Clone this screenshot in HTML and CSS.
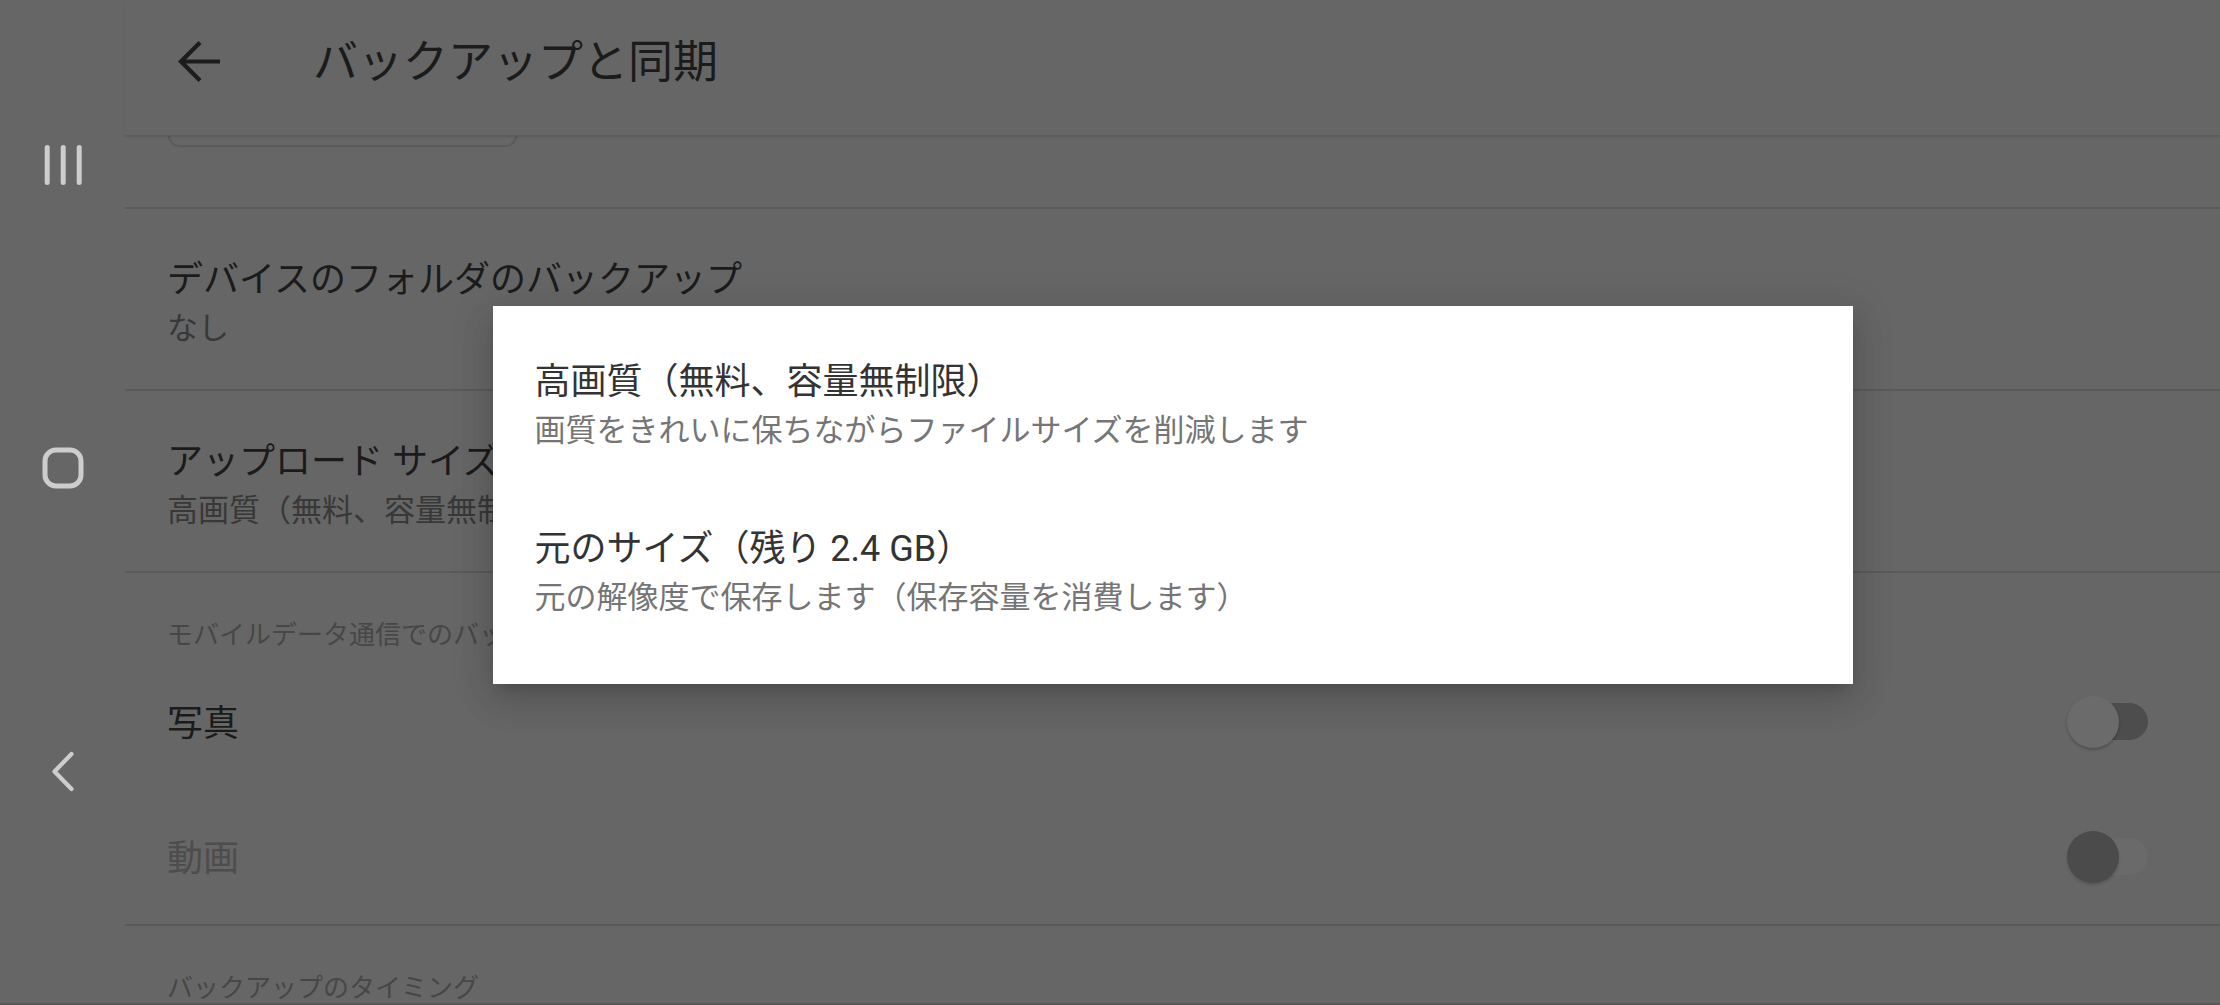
FILE: index.html
```html
<!DOCTYPE html>
<html lang="ja">
<head>
<meta charset="utf-8">
<title>バックアップと同期</title>
<link rel="stylesheet" href="styles.css">
</head>
<body>
<div class="screen">
  <nav class="sysnav">
    <svg class="nav-icon" viewBox="0 0 44 44" aria-hidden="true">
      <rect x="3.7" y="2" width="5" height="40" rx="2.5"/>
      <rect x="19.7" y="2" width="5" height="40" rx="2.5"/>
      <rect x="35.7" y="2" width="5" height="40" rx="2.5"/>
    </svg>
    <svg class="nav-icon" viewBox="0 0 44 44" aria-hidden="true">
      <rect class="outline" x="4" y="4" width="36" height="36" rx="11"/>
    </svg>
    <svg class="nav-icon" viewBox="0 0 44 44" aria-hidden="true">
      <path class="chev" d="M30.5 5 L13.5 22.5 L30.5 40"/>
    </svg>
  </nav>

  <div class="app">
    <header class="toolbar">
      <svg class="back" viewBox="0 0 44 44" aria-hidden="true">
        <path d="M43 20.5 H5 M23 1.5 L4 20.5 L23 39.5"/>
      </svg>
      <h1 class="title">バックアップと同期</h1>
    </header>

    <div class="list">
      <div class="tail-section"><div class="btn-tail"></div></div>
      <div class="divider"></div>

      <div class="row two-line">
        <div class="row-title">デバイスのフォルダのバックアップ</div>
        <div class="row-sub">なし</div>
      </div>
      <div class="divider"></div>

      <div class="row two-line">
        <div class="row-title">アップロード サイズ</div>
        <div class="row-sub">高画質（無料、容量無制限）</div>
      </div>
      <div class="divider"></div>

      <div class="subheader">モバイルデータ通信でのバックアップ</div>

      <div class="row switch-row">
        <div class="row-title">写真</div>
        <div class="switch"><span class="thumb"></span></div>
      </div>
      <div class="row switch-row disabled">
        <div class="row-title">動画</div>
        <div class="switch"><span class="thumb"></span></div>
      </div>
      <div class="divider"></div>

      <div class="subheader">バックアップのタイミング</div>
    </div>
  </div>

  <div class="overlay">
    <div class="dialog">
      <div class="option">
        <div class="opt-title">高画質（無料、容量無制限）</div>
        <div class="opt-sub">画質をきれいに保ちながらファイルサイズを削減します</div>
      </div>
      <div class="option">
        <div class="opt-title">元のサイズ（残り 2.4 GB）</div>
        <div class="opt-sub">元の解像度で保存します（保存容量を消費します）</div>
      </div>
    </div>
  </div>
</div>
</body>
</html>
```

FILE: styles.css
```css
html, body {
  margin: 0;
  padding: 0;
  height: 100%;
  overflow: hidden;
}

body {
  background: #666666;
  font-family: Roboto, "Noto Sans CJK JP", sans-serif;
}

.screen {
  position: relative;
  display: flex;
  width: 2220px;
  height: 1005px;
  overflow: hidden;
  border-bottom: 2px solid #575757;
  box-sizing: border-box;
}

/* system navigation bar */
.sysnav {
  width: 125px;
  flex: none;
  display: flex;
  flex-direction: column;
  align-items: center;
  padding-top: 143px;
  gap: 259px;
  box-sizing: border-box;
}

.nav-icon {
  display: block;
  width: 44px;
  height: 44px;
  fill: #cdcdcd;
}

.nav-icon .outline {
  fill: none;
  stroke: #cdcdcd;
  stroke-width: 5;
}

.nav-icon .chev {
  fill: none;
  stroke: #cdcdcd;
  stroke-width: 4.2;
  stroke-linecap: round;
  stroke-linejoin: round;
}

/* app */
.app {
  flex: 1;
  min-width: 0;
  display: flex;
  flex-direction: column;
}

.toolbar {
  flex: none;
  height: 136px;
  box-sizing: border-box;
  padding: 0 0 9px 52px;
  display: flex;
  align-items: center;
  border-bottom: 1px solid #5d5d5d;
  box-shadow: 0 1px 2px rgba(0, 0, 0, 0.12);
  position: relative;
  z-index: 1;
}

.back {
  display: block;
  flex: none;
  width: 44px;
  height: 44px;
  fill: none;
  stroke: #1c1c1c;
  stroke-width: 4.2;
}

.title {
  margin: 0 0 0 92px;
  font-size: 45px;
  font-weight: 400;
  line-height: 64px;
  color: #1b1b1b;
  white-space: nowrap;
}

.list {
  display: flex;
  flex-direction: column;
}

.tail-section {
  height: 71px;
  box-sizing: border-box;
  padding-left: 43px;
}

.btn-tail {
  width: 349px;
  height: 11px;
  box-sizing: border-box;
  border: 2px solid #5b5b5b;
  border-top: 0;
  border-radius: 0 0 12px 12px;
}

.divider {
  flex: none;
  height: 2px;
  background: #5a5a5a;
}

.row {
  box-sizing: border-box;
  padding: 0 72px 0 42px;
}

.two-line {
  height: 180px;
  padding-top: 45px;
}

.row-title {
  font-size: 36px;
  line-height: 52px;
  color: #1b1b1b;
  white-space: nowrap;
}

.row-sub {
  font-size: 31px;
  line-height: 45px;
  color: #383838;
  white-space: nowrap;
}

.subheader {
  padding: 44px 0 0 42px;
  font-size: 26px;
  line-height: 37px;
  color: #474747;
  white-space: nowrap;
}

.switch-row {
  height: 135px;
  display: flex;
  align-items: center;
  justify-content: space-between;
}

.switch-row .row-title {
  padding-top: 4px;
}

.switch {
  position: relative;
  flex: none;
  width: 74px;
  height: 37px;
  border-radius: 18.5px;
  background: #4d4d4d;
}

.thumb {
  position: absolute;
  left: -7.5px;
  top: -7.5px;
  width: 52px;
  height: 52px;
  border-radius: 50%;
  background: #6b6b6b;
  box-shadow: 0 2px 3px rgba(0, 0, 0, 0.22);
}

.disabled .row-title {
  color: #4d4d4d;
}

.disabled .switch {
  background: #6a6a6a;
}

.disabled .thumb {
  background: #4b4b4b;
  box-shadow: 0 2px 3px rgba(0, 0, 0, 0.15);
}

/* dialog */
.overlay {
  position: absolute;
  top: 0;
  left: 125px;
  right: 0;
  bottom: 0;
  display: flex;
  justify-content: center;
  align-items: flex-start;
  padding-top: 306px;
  box-sizing: border-box;
  z-index: 5;
}

.dialog {
  width: 1360px;
  height: 378px;
  box-sizing: border-box;
  padding: 50px 42px 0;
  background: #ffffff;
  display: flex;
  flex-direction: column;
  gap: 70px;
  box-shadow: 0 8px 12px -6px rgba(0, 0, 0, 0.16),
              0 18px 32px 2px rgba(0, 0, 0, 0.1),
              0 6px 40px 6px rgba(0, 0, 0, 0.09);
}

.opt-title {
  font-size: 36px;
  line-height: 52px;
  color: #333333;
  white-space: nowrap;
}

.opt-sub {
  font-size: 31px;
  line-height: 45px;
  color: #757575;
  white-space: nowrap;
}
```
